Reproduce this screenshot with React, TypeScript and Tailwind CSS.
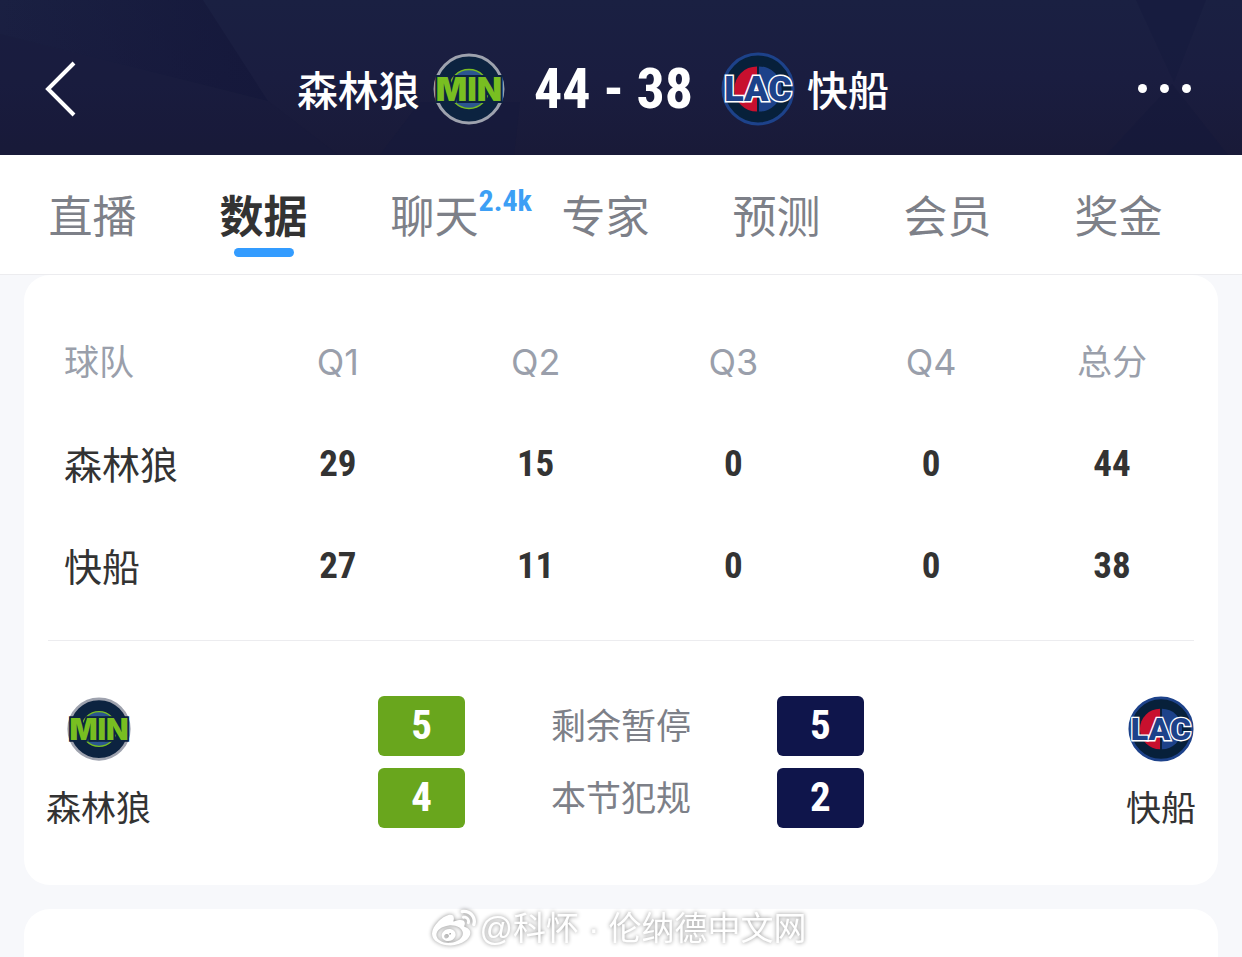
import { FaWeibo } from "react-icons/fa";

const tabs = [
  { name: "直播" },
  { name: "数据", active: true },
  { name: "聊天", badge: "2.4k" },
  { name: "专家" },
  { name: "预测" },
  { name: "会员" },
  { name: "奖金" },
];

const quarters = ["Q1", "Q2", "Q3", "Q4"];

const scores = [
  { team: "森林狼", points: [29, 15, 0, 0], total: 44 },
  { team: "快船", points: [27, 11, 0, 0], total: 38 },
];

const stats = [
  { label: "剩余暂停", home: 5, away: 5 },
  { label: "本节犯规", home: 4, away: 2 },
];

// condensed digits, used for every score and counter
const digits = "font-['Roboto_Condensed','Roboto','Liberation_Sans',sans-serif] font-bold";

function MinLogo({ className }: { className: string }) {
  return (
    <svg viewBox="0 0 72 72" className={className} aria-label="MIN">
      <circle cx="36" cy="36" r="33" fill="#0c2340" stroke="#9ea2ae" strokeWidth="3" />
      <circle cx="36" cy="36" r="19" fill="#2c5690" stroke="#78be21" strokeWidth="1.5" />
      <text
        x="36"
        y="48"
        textAnchor="middle"
        className="font-['Inter'] text-[32px] font-black"
        fill="#78be21"
        stroke="#0c2340"
        strokeWidth="4"
        paintOrder="stroke"
      >
        MIN
      </text>
    </svg>
  );
}

function LacLogo({ className }: { className: string }) {
  return (
    <svg viewBox="0 0 72 72" className={className} aria-label="LAC">
      <circle cx="36" cy="36" r="34" fill="#07203a" stroke="#1d428a" strokeWidth="3" />
      <path d="M35 14a22 22 0 0 0 0 44z" fill="#c8102e" />
      <path d="M37 14a22 22 0 0 1 0 44z" fill="#1d428a" />
      <text
        x="36"
        y="48"
        textAnchor="middle"
        className="font-['Roboto'] text-[35px] font-black"
        fill="#1d428a"
        stroke="#fff"
        strokeWidth="3"
        paintOrder="stroke"
      >
        LAC
      </text>
    </svg>
  );
}

function Header() {
  return (
    <header className="relative bg-[#1a1d40] text-white">
      <svg
        viewBox="0 0 1242 155"
        preserveAspectRatio="none"
        className="absolute inset-0 h-full w-full"
        aria-hidden="true"
      >
        <defs>
          <linearGradient id="shade" x1="0" y1="0" x2="0" y2="1">
            <stop offset="0" stopColor="#1a2042" />
            <stop offset="0.5" stopColor="#1a1d40" />
            <stop offset="1" stopColor="#191a38" />
          </linearGradient>
          <linearGradient id="facet" x1="0" y1="0" x2="1" y2="0">
            <stop offset="0" stopColor="#14173a" stopOpacity="0" />
            <stop offset="1" stopColor="#14173a" stopOpacity="0.8" />
          </linearGradient>
        </defs>
        <path d="M0 0h1242v155H0z" fill="url(#shade)" />
        <path d="M0 0h203l65 101L0 34z" fill="url(#facet)" />
        <path d="M0 34l268 67 70 54H0z" fill="#161a3b" opacity="0.3" />
        <path d="M1136 0h70l-32 82z" fill="#151a3d" opacity="0.6" />
        <path d="M1172 84l56 71h-122z" fill="#14173a" opacity="0.5" />
        <path d="M420 102h100l-6 53H380z" fill="#15183b" opacity="0.4" />
      </svg>

      <div className="relative flex h-[155px] items-center pt-[22px] pr-[51px] pl-11">
        <button type="button" aria-label="返回">
          <svg viewBox="0 0 32 56" className="h-14 w-8" fill="none" stroke="currentColor" strokeWidth="4">
            <path d="M30 2L4 28l26 26" />
          </svg>
        </button>

        <div className="flex flex-1 items-center justify-center pr-7">
          <span className="text-[41px] font-medium">森林狼</span>
          <MinLogo className="ml-3 size-[74px]" />
          <span className={`mx-7 text-[56px] ${digits}`}>44 - 38</span>
          <LacLogo className="mr-3 size-[74px]" />
          <span className="text-[41px] font-medium">快船</span>
        </div>

        <button type="button" aria-label="更多" className="flex gap-[13px]">
          <span className="size-[9px] rounded-full bg-white" />
          <span className="size-[9px] rounded-full bg-white" />
          <span className="size-[9px] rounded-full bg-white" />
        </button>
      </div>
    </header>
  );
}

function Tabs() {
  return (
    <nav className="grid h-[120px] grid-cols-7 border-b border-[#ececef] bg-white pr-[38px] pl-[7px]">
      {tabs.map((tab) => (
        <a
          key={tab.name}
          href="#"
          className={
            tab.active
              ? "flex flex-col items-center pt-8 text-[44px] leading-[54px] font-bold text-[#333333]"
              : "flex flex-col items-center pt-8 text-[44px] leading-[54px] text-[#7d8088]"
          }
        >
          <span className="relative">
            {tab.name}
            {tab.badge && (
              <span className={`absolute bottom-5 left-full text-[30px] leading-10 text-[#3d9ff5] ${digits}`}>
                {tab.badge}
              </span>
            )}
          </span>
          {tab.active && <span className="mt-[7px] h-[9px] w-[60px] rounded-full bg-[#339cff]" />}
        </a>
      ))}
    </nav>
  );
}

function ScoreTable() {
  return (
    <table className="w-full table-fixed">
      <thead>
        <tr className="h-[102px] text-[35px] text-[#9a9fab]">
          <th className="w-1/6 pb-1 pl-4 text-left font-normal">球队</th>
          {quarters.map((q) => (
            <th key={q} className="font-['Inter'] text-[36px] font-normal">
              {q}
            </th>
          ))}
          <th className="w-[164px] pb-1 font-normal">总分</th>
        </tr>
      </thead>
      <tbody>
        {scores.map((row) => (
          <tr key={row.team} className={`h-[102px] text-center text-[37px] text-[#333333] ${digits}`}>
            <th className="pb-1 pl-4 text-left font-['Noto_Sans_CJK_SC'] text-[38px] font-normal">
              {row.team}
            </th>
            {row.points.map((p, i) => (
              <td key={i}>{p}</td>
            ))}
            <td>{row.total}</td>
          </tr>
        ))}
      </tbody>
    </table>
  );
}

function TeamStats() {
  return (
    <div className="grid grid-cols-[1fr_486px_1fr] px-[22px] pt-[55px] pb-[53px]">
      <div className="flex flex-col items-center justify-self-start">
        <MinLogo className="size-[66px]" />
        <span className="mt-[18px] text-[35px] leading-[52px] text-[#333333]">森林狼</span>
      </div>

      <div className="flex flex-col gap-3">
        {stats.map((s) => (
          <div key={s.label} className="flex h-[60px] items-center justify-between">
            <span
              className={`flex h-full w-[87px] items-center justify-center rounded-md bg-[#69a61d] text-[41px] text-white ${digits}`}
            >
              {s.home}
            </span>
            <span className="pb-1 text-[35px] leading-[52px] text-[#7d8088]">{s.label}</span>
            <span
              className={`flex h-full w-[87px] items-center justify-center rounded-md bg-[#0f154b] text-[41px] text-white ${digits}`}
            >
              {s.away}
            </span>
          </div>
        ))}
      </div>

      <div className="flex flex-col items-center justify-self-end">
        <LacLogo className="size-[66px]" />
        <span className="mt-[18px] text-[35px] leading-[52px] text-[#333333]">快船</span>
      </div>
    </div>
  );
}

export default function App() {
  return (
    <div className="relative flex min-h-screen flex-col bg-[#f7f8fb] font-['Noto_Sans_CJK_SC',sans-serif]">
      <Header />
      <Tabs />

      <main className="flex flex-1 flex-col gap-6 px-6">
        <section className="rounded-[26px] bg-white">
          <div className="mx-6 border-b border-[#ececef] pt-9 pb-[23px]">
            <ScoreTable />
          </div>
          <TeamStats />
        </section>
        <section className="flex-1 rounded-t-[26px] bg-white" />
      </main>

      <div className="absolute inset-x-0 bottom-1.5 flex items-center justify-center gap-1 pr-1 text-white drop-shadow-[0_0_2px_rgba(0,0,0,0.45)]">
        <FaWeibo size={44} />
        <span className="font-['Liberation_Sans','Noto_Sans_CJK_SC'] text-[33px] leading-10">
          @科怀 · 伦纳德中文网
        </span>
      </div>
    </div>
  );
}
